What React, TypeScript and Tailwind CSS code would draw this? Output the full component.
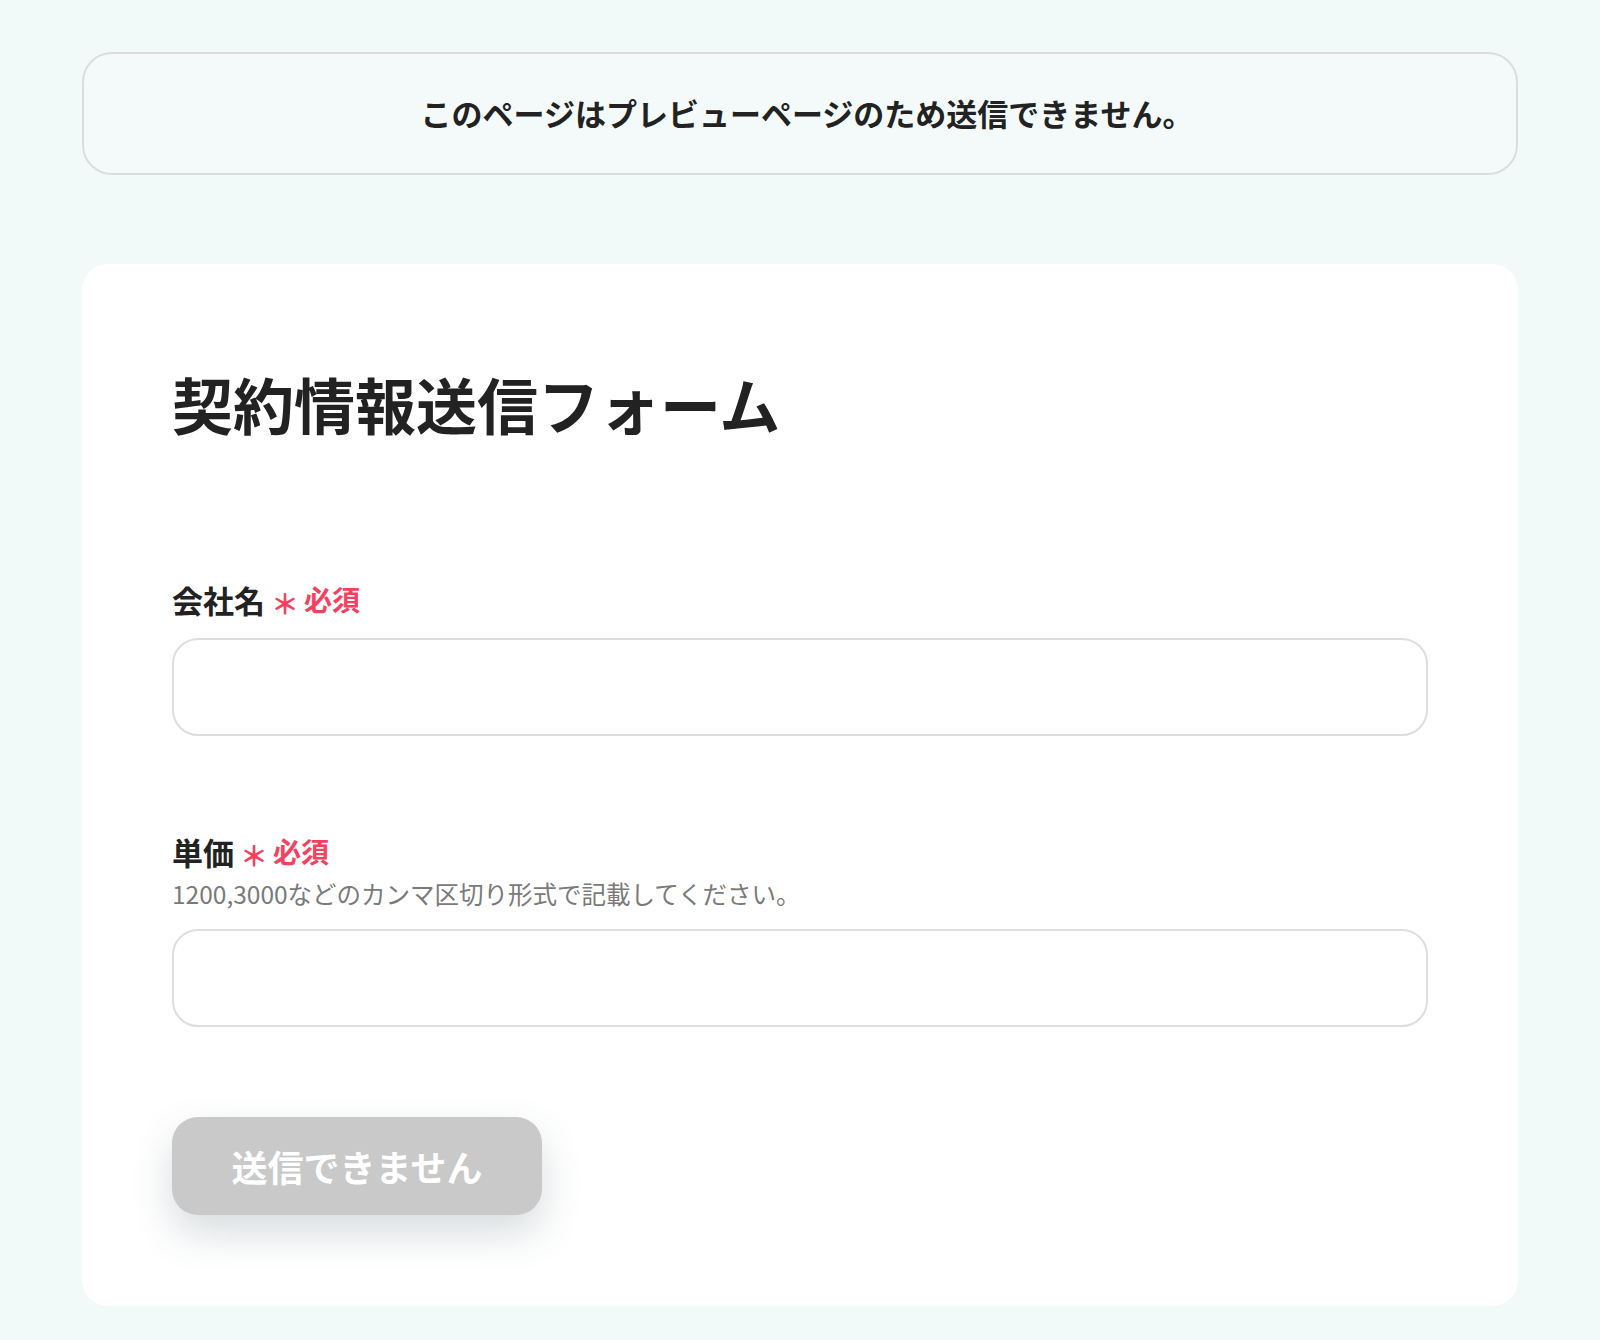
const FONT = { fontFamily: '"Noto Sans CJK JP", "Noto Sans", sans-serif' };

function Required() {
  return (
    <span className="ml-[6px] inline-flex items-center text-[#f5405f] font-bold">
      <span className="text-[28px] leading-none mt-[6px] mr-[5px]">＊</span>
      <span className="text-[28px]">必須</span>
    </span>
  );
}

function Field({ label, help }: { label: string; help?: string }) {
  return (
    <div className="flex flex-col">
      <label className="flex items-center text-[31px] leading-[45px] font-bold text-[#222]">
        {label}
        <Required />
      </label>
      {help && (
        <p className="mt-[2px] text-[24.5px] leading-[36px] text-[#7a7a7a]">{help}</p>
      )}
      <input
        type="text"
        className={`${help ? 'mt-[17px]' : 'mt-[16px]'} h-[98px] w-full rounded-[26px] border-2 border-[#dedede] bg-white px-6 text-[28px] outline-none`}
      />
    </div>
  );
}

export default function App() {
  return (
    <div className="min-h-[1340px] bg-[#f2f9f9] px-[82px] pt-[52px] pb-[33px]" style={FONT}>
      <div className="flex h-[123px] items-center justify-center rounded-[30px] border-2 border-[#dcdcdc] bg-[#f3faf9] pl-[14px]">
        <p className="text-[31px] font-bold text-[#222]">このページはプレビューページのため送信できません。</p>
      </div>

      <div className="mt-[89px] rounded-[26px] bg-white px-[90px] pt-[95px] pb-[91px]">
        <h1 className="text-[61px] leading-[90px] font-bold text-[#222]">契約情報送信フォーム</h1>

        <div className="mt-[128px] flex flex-col gap-[93px]">
          <Field label="会社名" />
          <Field label="単価" help="1200,3000などのカンマ区切り形式で記載してください。" />
        </div>

        <button
          disabled
          className="mt-[90px] h-[98px] w-[370px] rounded-[26px] bg-[#c9c9c9] text-[36px] font-bold text-white shadow-[0_18px_40px_rgba(60,80,90,0.2)]"
        >
          送信できません
        </button>
      </div>
    </div>
  );
}
